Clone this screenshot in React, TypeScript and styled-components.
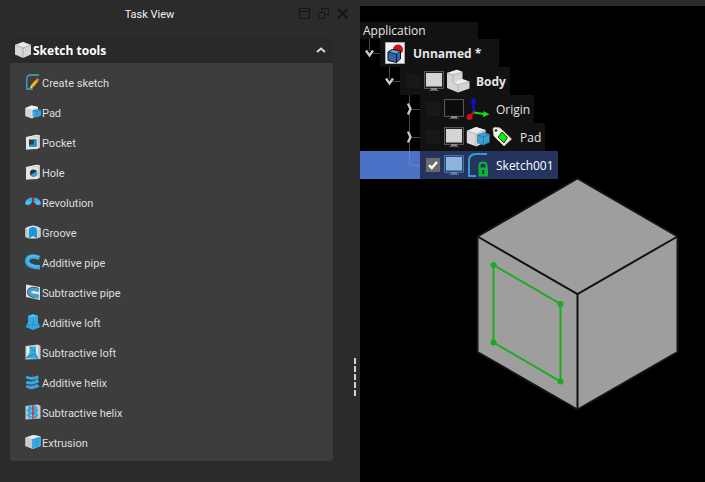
import React, { useState } from "react";
import styled, { createGlobalStyle } from "styled-components";

const GlobalStyle = createGlobalStyle`
  * { box-sizing: border-box; }
  html, body, #root { height: 100%; }
  body {
    margin: 0;
    overflow: hidden;
    background: #2b2b2b;
    color: #e0e0e0;
    font-family: Roboto, "Noto Sans", sans-serif;
    font-size: 11px;
  }
  svg { display: block; flex: none; }
`;

const Window = styled.div`
  display: flex;
  min-height: 100vh;
`;

const Dock = styled.aside`
  display: flex;
  flex: none;
  width: 360px;
`;

const DockMain = styled.div`
  flex: 1;
  min-width: 0;
`;

const DockHeader = styled.header`
  display: flex;
  align-items: center;
  height: 28px;
  padding-right: 5px;
`;

const DockTitle = styled.h1`
  flex: 1;
  margin: 0;
  padding-top: 2px;
  font-size: 11px;
  font-weight: 400;
  line-height: 16px;
  text-align: center;
  color: #f2f2f2;
`;

const DockButtons = styled.div`
  display: flex;
  gap: 7px;
`;

const PlainButton = styled.button`
  display: flex;
  align-items: center;
  justify-content: center;
  margin: 0;
  padding: 0;
  border: 0;
  background: none;
  color: inherit;
  font: inherit;
  cursor: pointer;
`;

const DockButton = styled(PlainButton)`
  width: 12px;
  height: 12px;
  color: #151515;
`;

const Splitter = styled.div`
  display: flex;
  flex-direction: column;
  justify-content: flex-end;
  gap: 2px;
  width: 6px;
  padding-bottom: 86px;
`;

const Grip = styled.span`
  width: 2px;
  height: 6px;
  background: #d2d2d2;
`;

const TaskBox = styled.section`
  margin: 9px 21px 0 10px;
`;

const TaskHeader = styled(PlainButton)`
  justify-content: flex-start;
  gap: 2px;
  width: 100%;
  height: 26px;
  padding: 0 6px 0 5px;
  background: #292929;
  color: #ffffff;
  font-family: "Open Sans", "Noto Sans", sans-serif;
  font-weight: 700;
  font-size: 12px;
`;

const HeaderText = styled.span`
  flex: 1;
  text-align: left;
`;

const TaskList = styled.ul`
  margin: 0;
  padding: 4px 15px;
  list-style: none;
  background: #3d3d3d;
  border-radius: 0 0 4px 4px;
`;

const TaskButton = styled(PlainButton)`
  justify-content: flex-start;
  gap: 1px;
  height: 30px;
  color: #dedede;
`;

const Viewport = styled.main`
  flex: 1;
  min-width: 0;
  margin-top: 6px;
  padding-top: 16px;
  background: #000000;
`;

const Tree = styled.div`
  font-family: "Open Sans", "Noto Sans", sans-serif;
  font-size: 12px;
  line-height: 16px;
  color: #e6e6e6;
`;

const TreeTitle = styled.div`
  width: 118px;
  height: 17px;
  padding: 1px 0 0 3px;
  background: #121212;
`;

const TreeRow = styled.div<{ $level: number; $selected?: boolean }>`
  display: flex;
  width: fit-content;
  height: 28px;
  padding-left: ${(p) => p.$level * 20}px;
  background: ${(p) => (p.$selected ? "#4b72c6" : "transparent")};
`;

const TreeItem = styled.div<{ $bold?: boolean; $selected?: boolean; $root?: boolean }>`
  display: flex;
  align-items: center;
  padding: ${(p) => (p.$root ? "0 18px 0 5px" : "0 4px 0 6px")};
  background: ${(p) => (p.$selected ? "#24345f" : "#121212")};
  color: ${(p) => (p.$selected ? "#ffffff" : "inherit")};
  font-weight: ${(p) => (p.$bold ? 700 : 400)};
`;

const ItemLabel = styled.span`
  padding-top: 2px;
`;

const Expander = styled(PlainButton)`
  width: 20px;
  height: 28px;
`;

const Branch = styled.span`
  width: 20px;
  height: 28px;
`;

const Check = styled.input`
  appearance: none;
  width: 14px;
  height: 14px;
  margin: 0 4px 0 0;
  background: #171818;
  &:checked {
    background: #6a6a6a
      url("data:image/svg+xml,%3Csvg xmlns='http://www.w3.org/2000/svg' viewBox='0 0 14 14'%3E%3Cpath d='M3 7.2 5.8 10 11 4' fill='none' stroke='white' stroke-width='2.4'/%3E%3C/svg%3E");
  }
`;

const ItemIcons = styled.span`
  display: flex;
  align-items: center;
  gap: 2px;
  margin-right: 6px;
`;

const CubeView = styled.svg`
  margin: -2px 0 0 115px;
`;

/* ---------- 16px task icons ---------- */

const BLUE = "#36a9e1";
const SKY = "#4cc0ee";
const DEEP = "#1b86bd";
const LIGHT = "#e4e4e4";
const MID = "#c9c9c9";

const Icon16 = ({ children }: { children: React.ReactNode }) => (
  <svg width="16" height="16" viewBox="0 0 16 16" aria-hidden="true">
    {children}
  </svg>
);

const Plate = () => (
  <>
    <path d="M1 3.5 12 .7 15 2v12L1 15.500z" fill={MID} />
    <path d="M1 3.8 13 3v12L1 15.500z" fill={LIGHT} />
    <path d="M1 3.5 12 1.2 15 2" fill="none" stroke="#f4f4f4" />
  </>
);

const icons: Record<string, React.ReactNode> = {
  sketch: (
    <>
      <path d="M14 1H6Q1.800 1 1.800 5v10h6" fill="none" stroke="#3fa9cc" strokeWidth="1.300" />
      <path d="m5.500 13.500.5-2.500L11 5.500l2.300 1.800L8 13.500z" fill="#f5b800" />
      <path d="m11 5.500 1.200-1.500 2.200 1.800-1.100 1.500z" fill="#e0675b" />
      <path d="m5 14.500.7-2.500 1.800 1.500z" fill="#f5ddb0" />
    </>
  ),
  pad: (
    <>
      <path d="M.5 4 6.500 1.500 13 3v8l-6 3.500L.5 12z" fill={LIGHT} />
      <path d="m.5 4 6 1.500L13 3 6.500 1.500z" fill="#f2f2f2" />
      <path d="M6.500 5.500V14L.5 12V4z" fill="#d5d5d5" />
      <path d="m7.500 6.500 4-1.500 4.500 1v5.500L12 13.500l-4.500-1z" fill={BLUE} />
      <path d="m7.500 6.500 4.500 1 4-1.500M12 7.500v6" fill="none" stroke={DEEP} strokeWidth=".8" />
    </>
  ),
  pocket: (
    <>
      <Plate />
      <path d="M4 5.500h7.500v7H4z" fill="#26323a" />
      <path d="M4.500 12.500V10.500H8.500V5.500h3v7z" fill="#2597d3" />
      <path d="M5.500 6.500H9V10H5.500z" fill="#1f4a63" />
    </>
  ),
  hole: (
    <>
      <Plate />
      <circle cx="8.500" cy="9" r="3.600" fill="#27363f" />
      <path d="M11.800 7.200A3.600 3.600 0 1 1 5.500 11z" fill="#2ba3df" />
    </>
  ),
  revolution: (
    <>
      <path d="M.3 9Q1 3.500 8 3.500T15.700 9v1.500H11L10 9H6l-1 1.500H.3z" fill={BLUE} />
      <ellipse cx="3" cy="8.800" rx="2.600" ry="2.200" fill={SKY} />
      <ellipse cx="13" cy="8.800" rx="2.600" ry="2.200" fill={SKY} />
      <path d="M8 0v16" stroke="#8f1d1d" strokeWidth="1.600" />
    </>
  ),
  groove: (
    <>
      <path d="M.5 4Q8-1 15.500 4v9L11.500 14.500h-7L.5 13z" fill={LIGHT} />
      <path d="M.5 4v9l4 1.500v-8M15.500 4v9l-4 1.500v-8" fill={MID} />
      <path d="M4 5.500Q4 3 8 3t4 2.500V14.500L8 12l-4 2.500z" fill="#189add" />
      <path d="M8 3v9" stroke={DEEP} strokeWidth=".8" />
    </>
  ),
  pipe: (
    <>
      <path d="M14.500 4Q9 1.500 5 3C.5 5.500 2 10 5.500 11.500Q9 13.300 15 13.300" fill="none" stroke={BLUE} strokeWidth="4.400" />
      <path d="M13.500 3Q8 1 5 2.500C1.500 4.500 2 8 4.500 10Q8 12.300 14 12.300" fill="none" stroke={SKY} strokeWidth="1.500" />
    </>
  ),
  subPipe: (
    <>
      <path d="m1 .5 14 2.500v13L1 13z" fill={LIGHT} />
      <path d="M13.500 6Q5 3 4 7.500T13.500 12.500" fill="none" stroke="#57666e" strokeWidth="4" />
      <path d="M14 6.300Q5 4 4.500 8Q5 11.500 14 13" fill="none" stroke={BLUE} strokeWidth="2.800" />
    </>
  ),
  loft: (
    <>
      <path d="M3 2 8 .3 13 2v6.500L15.500 13 8 16 .5 13 3 8.500z" fill={BLUE} />
      <path d="m3 2 5 1.500L13 2 8 .3z" fill={SKY} />
      <path d="M8 3.500V10l-1 5.300M1.500 12 8 10l6.500 2" fill="none" stroke="#258fc4" strokeWidth=".8" />
    </>
  ),
  subLoft: (
    <>
      <path d="M.5 2 13 .5 15.500 2v13L.5 15.500z" fill={MID} />
      <path d="M1.500 2.500 13 1.500v13L1.500 14z" fill="#e9e9e9" />
      <path d="M4.500 2.500h6.500v6l2.500 6.500L1 14l3.500-5z" fill={BLUE} />
      <path d="m5 3 5 5M1 14l8-4 4 4" fill="none" stroke={DEEP} strokeWidth=".8" />
    </>
  ),
  helix: (
    <>
      <path d="M7.500 0v16" stroke="#b02020" strokeWidth="1.200" />
      <path d="M12 6 4 9M12 10.500 4 13" stroke={DEEP} strokeWidth="1.500" />
      <path d="M2.500 3.500Q7 5.500 12 3M2.500 8.500Q7 10 12.500 7.500M2.500 12.500Q7 15 12.500 12" fill="none" stroke={BLUE} strokeWidth="3" strokeLinecap="round" />
      <path d="M12 3v4.500" stroke={BLUE} strokeWidth="2" />
    </>
  ),
  subHelix: (
    <>
      <path d="M.5 2 13 .5 15.500 2v12.500L.5 15.500z" fill={MID} />
      <path d="M3.500 2.500 6 4.500 3.500 6.500 6 9l-2.500 2L6 14M11.500 2.500l-2 2L11.500 6.500l-2 2.500L11.500 11l-2 3" fill="none" stroke={BLUE} strokeWidth="3.200" />
      <path d="M8 0v16" stroke="#b02a2a" strokeWidth="1.400" />
    </>
  ),
  extrusion: (
    <>
      <path d="M.5 3.500 8 1l7.500 1.500V12L8 15 .5 12z" fill={LIGHT} />
      <path d="M.5 3.500 7 5v9.500L.5 12z" fill={MID} />
      <path d="m7 5 8.500-2.500V12L7 15z" fill={BLUE} />
      <path d="m4 2.300 6-1 5.500 1.200L7 5z" fill="#dff1fa" />
      <path d="M11.500 3.700v10" stroke="#2892cd" strokeWidth=".8" />
    </>
  ),
};

const tasks = [
  ["sketch", "Create sketch"],
  ["pad", "Pad"],
  ["pocket", "Pocket"],
  ["hole", "Hole"],
  ["revolution", "Revolution"],
  ["groove", "Groove"],
  ["pipe", "Additive pipe"],
  ["subPipe", "Subtractive pipe"],
  ["loft", "Additive loft"],
  ["subLoft", "Subtractive loft"],
  ["helix", "Additive helix"],
  ["subHelix", "Subtractive helix"],
  ["extrusion", "Extrusion"],
];

/* ---------- tree icons ---------- */

const Monitor = ({ tone }: { tone: "off" | "on" | "selected" }) => {
  const frame = tone === "selected" ? "#4f6f9c" : "#585858";
  const screen = { off: "#0c0c0c", on: "#d3d5d2", selected: "#8cb4df" }[tone];
  const rim = { off: "#121212", on: "#202020", selected: "#294a72" }[tone];
  return (
    <svg width="20" height="20" viewBox="0 0 20 20" aria-hidden="true">
      <path d="M.5.500h19v17H.5z" fill={rim} stroke={frame} />
      <path d="M2 2h16v13.500H2z" fill={screen} />
      <path d="M7 17h6v2H7z" fill={tone === "selected" ? "#6688b5" : "#8a8a8a"} />
      <path d="M5 19.500h10" stroke={frame} />
    </svg>
  );
};

const DocumentIcon = () => (
  <svg width="22" height="24" viewBox="0 0 22 24" aria-hidden="true">
    <path d="M.5 1.500h19v21H.5z" fill="#f2f2f2" stroke="#a9a9a9" />
    <circle cx="13" cy="8.500" r="5" fill="#d40f0f" />
    <path d="m3 11 4.500-2.500 8 1.500v8L11.500 21.500 3 19.500z" fill="#3465a4" stroke="#0b1521" />
    <path d="m3 11 8.500 2 4-3-8-1.500z" fill="#729fcf" stroke="#0b1521" strokeWidth=".8" />
    <path d="M11.500 13v8.500" stroke="#0b1521" />
  </svg>
);

const BodyIcon = () => (
  <svg width="24" height="24" viewBox="0 0 24 24" aria-hidden="true">
    <path d="M1 4 11 .8 16.500 3v7.500l7 2.500v6.500L12 23.500 1 19z" fill="#d4d4d4" />
    <path d="m1 4 10-3.200L16.500 3 7 6zM7 13l9.500-3 7 2.500L12 16z" fill="#ececec" />
    <path d="M7 6v7l5 3v7.500M7 6l9.500-3M12 16l11.500-3.500M1 4l6 2" fill="none" stroke="#aaaaaa" strokeWidth=".8" />
  </svg>
);

const OriginIcon = () => (
  <svg width="24" height="24" viewBox="0 0 24 24" aria-hidden="true">
    <path d="M7.500 15V4" stroke="#0b10ef" strokeWidth="2" />
    <path d="m4.500 6 3-6 3 6z" fill="#0b10ef" />
    <path d="m7.500 15.500 11 1.500" stroke="#12dc12" strokeWidth="2" />
    <path d="m17.500 14 6 3.500-6.500 2.500z" fill="#12dc12" />
    <path d="m8 15-3.500 4" stroke="#d01212" strokeWidth="2" />
    <circle cx="3.500" cy="20" r="3" fill="#d01212" />
  </svg>
);

const PadIcon = () => (
  <svg width="24" height="24" viewBox="0 0 24 24" aria-hidden="true">
    <path d="M.8 6 10 2l9.500 3v12l-9 4.500L.8 18z" fill="#d8d8d8" />
    <path d="m.8 6 9.200 3 9.500-4L10 2z" fill="#ebebeb" />
    <path d="M.8 6 10 9v12M10 9l9.500-4" fill="none" stroke="#b2b2b2" strokeWidth=".8" />
    <path d="m11.500 10 6.500-2.500 5.500 1.800v8L17.500 20l-6-2z" fill="#3a9ed0" stroke="#24769f" strokeWidth=".6" />
    <path d="m11.500 10 6 2 6-2.700M17.500 12v8" fill="none" stroke="#24769f" strokeWidth=".8" />
  </svg>
);

const TagIcon = () => (
  <svg width="22" height="22" viewBox="0 0 22 22" aria-hidden="true">
    <path d="M1 2.500 2.500 1.500 8 2 19.500 13 12 20 2 10z" fill="#f3f3ef" stroke="#c7b98c" />
    <circle cx="4" cy="4.500" r="1.300" fill="#242424" />
    <path d="m10 6 5.500 5.500-3.500 5.500-6-6z" fill="#00f000" stroke="#101010" strokeWidth=".8" />
  </svg>
);

const LockedSketchIcon = () => (
  <svg width="24" height="24" viewBox="0 0 24 24" aria-hidden="true">
    <path d="M21 1H10Q3 1 3 8v15h7" fill="none" stroke="#319dce" strokeWidth="2" />
    <path d="M13.500 16v-3.500Q13.500 9.500 17 9.500t3.500 3V16" fill="none" stroke="#09b53a" strokeWidth="2" />
    <path d="M12.500 14.500h9.500v9h-9.500z" fill="#09b53a" />
    <path d="M17.200 17v4" stroke="#17344a" strokeWidth="2" />
  </svg>
);

const LINE = "#494949";

const OpenBranch = () => (
  <svg width="20" height="28" viewBox="0 0 20 28" aria-hidden="true">
    <path d="M9.500 0v12M13 14.500h7" stroke={LINE} fill="none" />
    <path d="m6 11.500 3.500 5 3.500-5" stroke="#c8c8c8" strokeWidth="2.400" fill="none" />
  </svg>
);

const ClosedBranch = () => (
  <svg width="20" height="28" viewBox="0 0 20 28" aria-hidden="true">
    <path d="M9.500 0v8M9.500 20v8M12 14.500h8" stroke={LINE} fill="none" />
    <path d="m8 8.500 2.500 5.500L8 19.500" stroke="#c8c8c8" strokeWidth="2.400" fill="none" />
  </svg>
);

const Cube = () => (
  <CubeView width="206" height="236" viewBox="0 0 206 236" role="img" aria-label="Solid with sketch on its front face">
    <path d="m2.500 59.500 100-58 100 58v115.500l-100 57.500-100-57.500z" fill="#9e9e9e" stroke="#151515" strokeWidth="2" strokeLinejoin="round" />
    <path d="m2.500 59.500 100 57.500 100-57.500M102.500 117v115.500" fill="none" stroke="#111111" strokeWidth="2" />
    <path d="m18.500 88 67 39v77.500l-67-39z" fill="none" stroke="#1dab1d" strokeWidth="2" />
    <g fill="#1dab1d">
      <circle cx="18.500" cy="88" r="3" />
      <circle cx="85.500" cy="127" r="3" />
      <circle cx="85.500" cy="204.500" r="3" />
      <circle cx="18.500" cy="165.500" r="3" />
    </g>
  </CubeView>
);

export default function App() {
  const [open, setOpen] = useState(true);
  return (
    <>
      <GlobalStyle />
      <Window>
        <Dock>
          <DockMain>
            <DockHeader>
              <DockTitle>Task View</DockTitle>
              <DockButtons>
                <DockButton aria-label="Overlay">
                  <svg width="12" height="12" viewBox="0 0 12 12" fill="none" stroke="currentColor">
                    <path d="M.5.500h10v10H.5zM1 3.500h9" />
                  </svg>
                </DockButton>
                <DockButton aria-label="Float">
                  <svg width="12" height="12" viewBox="0 0 12 12" fill="none" stroke="currentColor">
                    <path d="M.5 4.500h6v6h-6zM3.500 4V.5h7v6H7" />
                  </svg>
                </DockButton>
                <DockButton aria-label="Close">
                  <svg width="12" height="12" viewBox="0 0 12 12" fill="none" stroke="currentColor" strokeWidth="2">
                    <path d="m1 1 9.500 9.500M10.500 1 1 10.500" />
                  </svg>
                </DockButton>
              </DockButtons>
            </DockHeader>
            <TaskBox>
              <TaskHeader aria-expanded={open} onClick={() => setOpen(!open)}>
                <Icon16>
                  <path d="M0 3 8 0l8 3v9.500L8 16l-8-3.500z" fill="#d6d6d6" />
                  <path d="m0 3 8 3 8-3-8-3z" fill="#e6e6e6" />
                  <path d="m0 3 8 3 8-3M8 6v10" fill="none" stroke="#a0a0a0" strokeWidth=".8" />
                </Icon16>
                <HeaderText>Sketch tools</HeaderText>
                <svg width="12" height="12" viewBox="0 0 12 12" aria-hidden="true">
                  <path d="m2 8 4-3.500L10 8" fill="none" stroke="#d8d8d8" strokeWidth="2" />
                </svg>
              </TaskHeader>
              {open && (
                <TaskList>
                  {tasks.map(([icon, label]) => (
                    <li key={icon}>
                      <TaskButton>
                        <Icon16>{icons[icon]}</Icon16>
                        <ItemLabel>{label}</ItemLabel>
                      </TaskButton>
                    </li>
                  ))}
                </TaskList>
              )}
            </TaskBox>
          </DockMain>
          <Splitter role="separator" aria-orientation="vertical">
            {[0, 1, 2, 3, 4].map((n) => (
              <Grip key={n} />
            ))}
          </Splitter>
        </Dock>
        <Viewport>
          <Tree>
            <TreeTitle>Application</TreeTitle>
            <TreeRow $level={0}>
              <Expander aria-label="Collapse Unnamed"><OpenBranch /></Expander>
              <TreeItem $bold $root>
                <ItemIcons><DocumentIcon /></ItemIcons>
                <ItemLabel>Unnamed *</ItemLabel>
              </TreeItem>
            </TreeRow>
            <TreeRow $level={1}>
              <Expander aria-label="Collapse Body"><OpenBranch /></Expander>
              <TreeItem $bold>
                <Check type="checkbox" aria-label="Body" />
                <ItemIcons><Monitor tone="on" /><BodyIcon /></ItemIcons>
                <ItemLabel>Body</ItemLabel>
              </TreeItem>
            </TreeRow>
            <TreeRow $level={2}>
              <Expander aria-label="Expand Origin"><ClosedBranch /></Expander>
              <TreeItem>
                <Check type="checkbox" aria-label="Origin" />
                <ItemIcons><Monitor tone="off" /><OriginIcon /></ItemIcons>
                <ItemLabel>Origin</ItemLabel>
              </TreeItem>
            </TreeRow>
            <TreeRow $level={2}>
              <Expander aria-label="Expand Pad"><ClosedBranch /></Expander>
              <TreeItem>
                <Check type="checkbox" aria-label="Pad" />
                <ItemIcons><Monitor tone="on" /><PadIcon /><TagIcon /></ItemIcons>
                <ItemLabel>Pad</ItemLabel>
              </TreeItem>
            </TreeRow>
            <TreeRow $level={2} $selected>
              <Branch>
                <svg width="20" height="28" viewBox="0 0 20 28" aria-hidden="true">
                  <path d="M9.500 0v12q0 2.500 2.500 2.500h8" stroke="#6c83b5" fill="none" />
                </svg>
              </Branch>
              <TreeItem $selected>
                <Check type="checkbox" aria-label="Sketch001" defaultChecked />
                <ItemIcons><Monitor tone="selected" /><LockedSketchIcon /></ItemIcons>
                <ItemLabel>Sketch001</ItemLabel>
              </TreeItem>
            </TreeRow>
          </Tree>
          <Cube />
        </Viewport>
      </Window>
    </>
  );
}
